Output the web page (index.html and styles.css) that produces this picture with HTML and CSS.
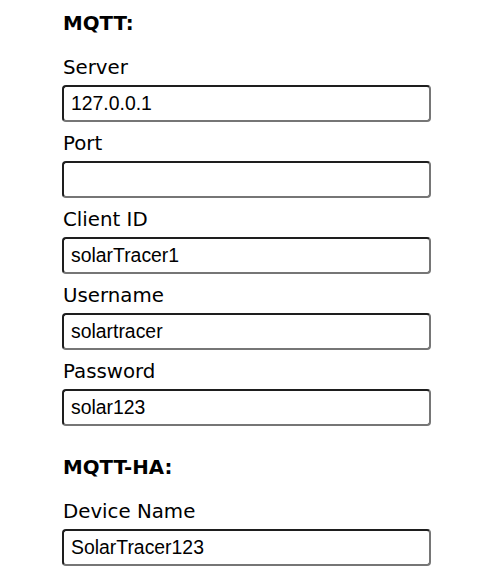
FILE: index.html
```html
<!DOCTYPE html>
<html>
<head>
<meta charset="utf-8">
<link rel="stylesheet" href="styles.css">
</head>
<body>
<div class="page">
  <h3 class="section">MQTT:</h3>
  <div class="field">
    <label class="label">Server</label>
    <input class="input" type="text" value="127.0.0.1">
  </div>
  <div class="field">
    <label class="label">Port</label>
    <input class="input" type="text" value="">
  </div>
  <div class="field">
    <label class="label">Client ID</label>
    <input class="input" type="text" value="solarTracer1">
  </div>
  <div class="field">
    <label class="label">Username</label>
    <input class="input" type="text" value="solartracer">
  </div>
  <div class="field">
    <label class="label">Password</label>
    <input class="input" type="text" value="solar123">
  </div>
  <h3 class="section section-2">MQTT-HA:</h3>
  <div class="field">
    <label class="label">Device Name</label>
    <input class="input" type="text" value="SolarTracer123">
  </div>
</div>
</body>
</html>
```

FILE: styles.css
```css
html, body {
  margin: 0;
  padding: 0;
  background: #ffffff;
}
.page {
  padding: 12px 0 0 62px;
  width: 369px;
  display: flex;
  flex-direction: column;
  font-family: "DejaVu Sans", Verdana, sans-serif;
  color: #000;
}
.section {
  margin: 0 0 20px 1px;
  font-size: 19.8px;
  line-height: 24px;
  font-weight: bold;
}
.section-2 {
  margin-top: 20px;
  margin-bottom: 20px;
}
.field {
  display: flex;
  flex-direction: column;
  margin-bottom: 10px;
}
.label {
  display: block;
  margin-left: 1px;
  font-size: 19.8px;
  line-height: 24px;
  margin-bottom: 5px;
}
.input {
  box-sizing: border-box;
  width: 369px;
  height: 37px;
  margin: 0;
  padding: 0 7px;
  border: 2px solid;
  border-color: #1e1e1e #767676 #767676 #1e1e1e;
  border-radius: 4px;
  background: #fff;
  font-family: "Liberation Sans", Arial, sans-serif;
  font-size: 19.4px;
  color: #000;
  outline: none;
}
```
